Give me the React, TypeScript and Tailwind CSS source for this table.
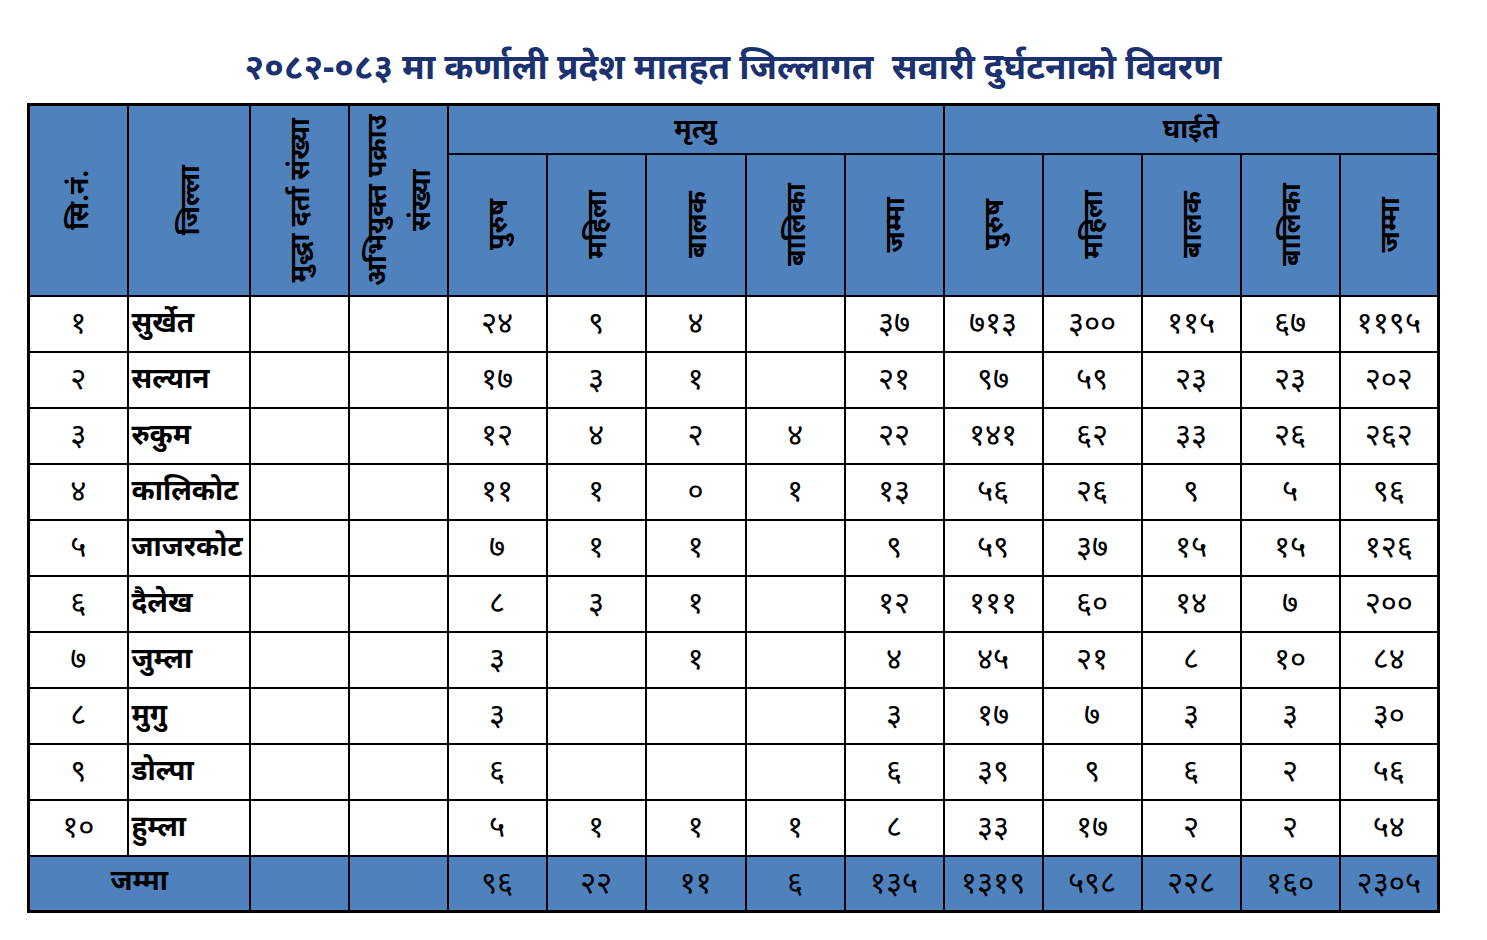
import React from "react";

const rows: string[][] = [
  ["१", "सुर्खेत", "२४", "९", "४", "", "३७", "७१३", "३००", "११५", "६७", "११९५"],
  ["२", "सल्यान", "१७", "३", "१", "", "२१", "९७", "५९", "२३", "२३", "२०२"],
  ["३", "रुकुम", "१२", "४", "२", "४", "२२", "१४१", "६२", "३३", "२६", "२६२"],
  ["४", "कालिकोट", "११", "१", "०", "१", "१३", "५६", "२६", "९", "५", "९६"],
  ["५", "जाजरकोट", "७", "१", "१", "", "९", "५९", "३७", "१५", "१५", "१२६"],
  ["६", "दैलेख", "८", "३", "१", "", "१२", "१११", "६०", "१४", "७", "२००"],
  ["७", "जुम्ला", "३", "", "१", "", "४", "४५", "२१", "८", "१०", "८४"],
  ["८", "मुगु", "३", "", "", "", "३", "१७", "७", "३", "३", "३०"],
  ["९", "डोल्पा", "६", "", "", "", "६", "३९", "९", "६", "२", "५६"],
  ["१०", "हुम्ला", "५", "१", "१", "१", "८", "३३", "१७", "२", "२", "५४"],
];

const totals = ["९६", "२२", "११", "६", "१३५", "१३१९", "५९८", "२२८", "१६०", "२३०५"];

const sub = ["पुरुष", "महिला", "बालक", "बालिका", "जम्मा", "पुरुष", "महिला", "बालक", "बालिका", "जम्मा"];

const widths = [99, 122, 99, 99, 99, 99, 100, 99, 99, 99, 99, 99, 99, 99];

const font = { fontFamily: '"Noto Sans", "Liberation Sans", sans-serif' };

function Vert({ children, className = "" }: { children: React.ReactNode; className?: string }) {
  return (
    <div className="flex h-full w-full items-center justify-center">
      <div className={"[writing-mode:vertical-rl] rotate-180 text-center " + className}>{children}</div>
    </div>
  );
}

export default function App() {
  return (
    <div className="min-h-[940px] w-[1487px] bg-white text-black" style={font}>
      <div className="pl-[27px]">
        <div className="w-[1412px] pt-[38px] text-center text-[35px] font-bold leading-[56px] text-[#1c3270]">
          २०८२-०८३ मा कर्णाली प्रदेश मातहत जिल्लागत&nbsp; सवारी दुर्घटनाको विवरण
        </div>
        <div className="pt-[9px]">
          <table className="w-[1412px] table-fixed border-collapse border-[3px] border-black text-[31px] leading-none">
            <colgroup>
              {widths.map((w, i) => (
                <col key={i} style={{ width: w }} />
              ))}
            </colgroup>
            <thead className="text-[27px]">
              <tr className="h-[49px] bg-[#4f81bd]">
                <th rowSpan={2} className="h-[191px] border-2 border-black p-0 font-bold">
                  <Vert className="leading-[1.1]">सि.नं.</Vert>
                </th>
                <th rowSpan={2} className="border-2 border-black p-0 font-bold">
                  <Vert className="leading-[1.1]">जिल्ला</Vert>
                </th>
                <th rowSpan={2} className="border-2 border-black p-0 font-bold">
                  <Vert className="leading-[1.1]">मुद्धा दर्ता संख्या</Vert>
                </th>
                <th rowSpan={2} className="border-2 border-black p-0 font-bold">
                  <Vert className="h-[178px] leading-[44px]">अभियुक्त पक्राउ संख्या</Vert>
                </th>
                <th colSpan={5} className="border-2 border-black p-0 pb-[4px] align-middle font-bold">
                  मृत्यु
                </th>
                <th colSpan={5} className="border-2 border-black p-0 pb-[4px] align-middle font-bold">
                  घाईते
                </th>
              </tr>
              <tr className="h-[142px] bg-[#4f81bd]">
                {sub.map((s, i) => (
                  <th key={i} className="border-2 border-black p-0 font-bold">
                    <Vert className="leading-[1.1]">{s}</Vert>
                  </th>
                ))}
              </tr>
            </thead>
            <tbody>
              {rows.map((r, ri) => (
                <tr key={ri} className="h-[56px]">
                  <td className="border-2 border-black p-0 pb-[4px] text-center">{r[0]}</td>
                  <td className="overflow-hidden whitespace-nowrap border-2 border-black px-[3px] py-0 pb-[6px] text-left text-[28px] font-bold">
                    {r[1]}
                  </td>
                  <td className="border-2 border-black p-0"></td>
                  <td className="border-2 border-black p-0"></td>
                  {r.slice(2, 12).map((v, ci) => (
                    <td key={ci} className="border-2 border-black p-0 pb-[4px] text-center">
                      {v}
                    </td>
                  ))}
                </tr>
              ))}
              <tr className="h-[56px] bg-[#4f81bd]">
                <td colSpan={2} className="border-2 border-black p-0 pb-[8px] text-center text-[28px] font-bold">
                  जम्मा
                </td>
                <td className="border-2 border-black p-0"></td>
                <td className="border-2 border-black p-0"></td>
                {totals.map((v, i) => (
                  <td key={i} className="border-2 border-black p-0 pb-[4px] text-center">
                    {v}
                  </td>
                ))}
              </tr>
            </tbody>
          </table>
        </div>
      </div>
    </div>
  );
}
